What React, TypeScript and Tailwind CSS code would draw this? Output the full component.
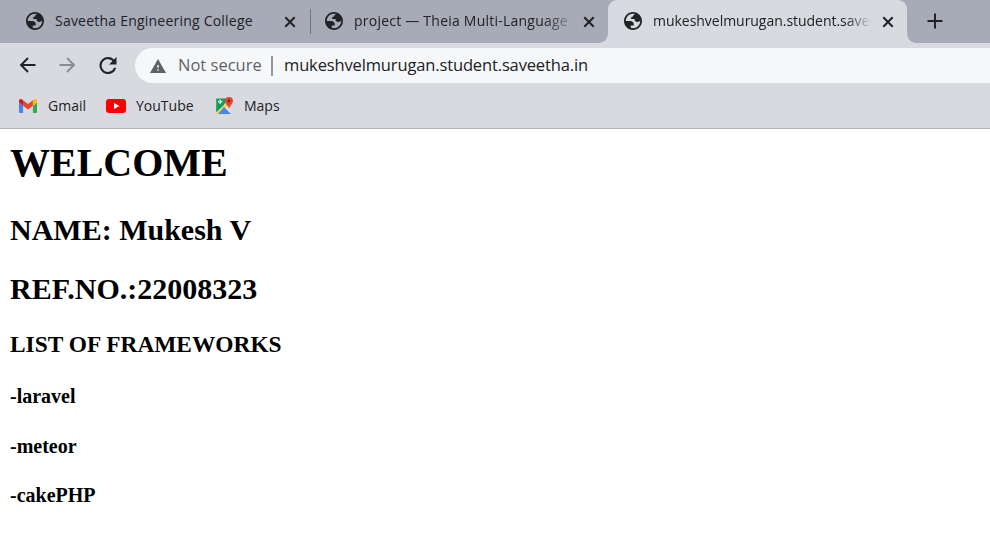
import React from 'react';

const ui = "font-['Open_Sans','Noto_Sans',sans-serif]";

function Globe() {
  return (
    <svg viewBox="2 2 20 20" className="-mt-px h-[18px] w-[18px] shrink-0" fill="#202225" fillRule="evenodd">
      <path d="M12 2C6.48 2 2 6.48 2 12s4.48 10 10 10 10-4.48 10-10S17.52 2 12 2zM4 12h4.4c3.4.02 4.9 1.73 4.5 5.13H9.5v2.47C10.3 19.86 11.1 20 12 20c4.42 0 8-3.58 8-8 0-.17 0-.34-.02-.5-.52 1-1.53 1.5-3 1.5-2.2 0-3.3-1.1-3.3-3.2H9.9c-.2-1.9.5-2.8 2.1-2.8 0-.98.32-1.54.97-1.67l1.06-1.05C13.4 4.1 12.7 4 12 4c-4.42 0-8 3.58-8 8z" />
    </svg>
  );
}

function Close() {
  return (
    <svg viewBox="0 0 12 12" className="h-3 w-3 shrink-0" stroke="#202225" strokeWidth="2">
      <path d="M1.3 1.3l9.4 9.4M10.7 1.3l-9.4 9.4" />
    </svg>
  );
}

function Gmail() {
  return (
    <svg viewBox="52 42 88 66" className="mt-px h-[14px] w-[18px]" preserveAspectRatio="none">
      <path fill="#4285f4" d="M58 108h14V74L52 59v43c0 3.320 2.690 6 6 6" />
      <path fill="#34a853" d="M120 108h14c3.320 0 6-2.690 6-6V59l-20 15" />
      <path fill="#fbbc04" d="M120 48v26l20-15v-8c0-7.420-8.470-11.650-14.400-7.200" />
      <path fill="#ea4335" d="M72 74V48l24 18 24-18v26L96 92" />
      <path fill="#c5221f" d="M52 51v8l20 15V48l-5.600-4.200c-5.940-4.450-14.400-.220-14.400 7.200" />
    </svg>
  );
}

function MapsIcon() {
  return (
    <svg viewBox="0 0 19 19" className="h-[19px] w-[19px]">
      <path d="M1.500 2.500h12L8 10l-6.800 6.500V3z" fill="#169c55" />
      <path d="M1.300 17L14 5v12.500H2z" fill="#eceeef" />
      <path d="M1 17L13 6l2 2-9 10H2z" fill="#fdd33c" />
      <path d="M3 18l6-7 7 7z" fill="#4285f4" />
      <path d="M10 11l5.500-2v8z" fill="#dfe3e6" />
      <path d="M7.400 5.400H5v1.100h1.200A1.500 1.500 0 1 1 5.900 4.500" fill="none" stroke="#fff" />
      <path d="M14 1a4 4 0 0 0-4 4c0 3 3.300 4.500 4 8 .7-3.500 4-5 4-8a4 4 0 0 0-4-4z" fill="#e84335" />
      <circle cx="14" cy="5" r="1.400" fill="#8e1e19" />
    </svg>
  );
}

export default function App() {
  return (
    <div className={`h-[545px] w-[990px] overflow-hidden bg-white text-[#202225] ${ui}`}>
      <div className="flex h-[43px] bg-[#a7abb7] text-[14px] leading-[40px]">
        <div className="flex w-[310px] items-center pl-[26px]">
          <Globe />
          <span className="-mt-[2px] ml-[11px] w-[229px] tracking-[0.22px] whitespace-nowrap">Saveetha Engineering College</span>
          <Close />
        </div>
        <div className="mt-[9px] h-[25px] w-px bg-[#70747d]" />
        <div className="flex w-[297px] items-center pl-[14px]">
          <Globe />
          <span className="-mt-[2px] ml-[11px] w-[215px] overflow-hidden tracking-[0.23px] whitespace-nowrap [mask-image:linear-gradient(to_right,black_88%,transparent_104%)]">project — Theia Multi-Language</span>
          <span className="ml-[14px]"><Close /></span>
        </div>
        <div className="relative flex w-[299px] items-center rounded-t-[9px] bg-[#d9dadf] pl-[16px]">
          <span className="absolute bottom-0 -left-[9px] h-[9px] w-[9px] bg-[radial-gradient(circle_at_0_0,transparent_8.500px,#d9dadf_9px)]" />
          <span className="absolute -right-[9px] bottom-0 h-[9px] w-[9px] bg-[radial-gradient(circle_at_100%_0,transparent_8.500px,#d9dadf_9px)]" />
          <Globe />
          <span className="-mt-[2px] ml-[11px] w-[219px] overflow-hidden tracking-[-0.03px] whitespace-nowrap [mask-image:linear-gradient(to_right,black_88%,transparent)]">mukeshvelmurugan.student.saveetha.in</span>
          <span className="ml-[10px]"><Close /></span>
        </div>
        <svg viewBox="0 0 16 16" className="mt-[13px] ml-[20px] h-4 w-4" stroke="#202225" strokeWidth="2"><path d="M8 .5v15M.5 8h15" /></svg>
      </div>

      <div className="flex h-[45px] items-center bg-[#d9dadf] pl-[19px]">
        <svg viewBox="0 0 18 18" className="-mt-px h-[18px] w-[18px]" fill="none" stroke="#202225" strokeWidth="1.900"><path d="M16.500 9H2M9 2L2 9 9 16" /></svg>
        <svg viewBox="0 0 18 18" className="-mt-px ml-[22px] h-[18px] w-[18px]" fill="none" stroke="#8a8c91" strokeWidth="1.900"><path d="M.5 9H15M8 2l7 7-7 7" /></svg>
        <svg viewBox="4 4 16 16" className="-mt-px ml-[22px] h-[17px] w-[18px]" fill="#202225"><path d="M17.650 6.350A7.960 7.960 0 0 0 12 4a8 8 0 1 0 7.730 10h-2.080A6 6 0 1 1 12 6c1.660 0 3.140.690 4.220 1.780L13 11h7V4z" /></svg>
        <div className="ml-[18px] flex h-[35px] flex-1 items-center rounded-l-full bg-[#f5f7f9] pl-[15px] text-[16.500px] whitespace-nowrap">
          <svg viewBox="1 2 22 19" className="h-[14px] w-[16px]" fill="#5d6064"><path d="M1 21h22L12 2 1 21zm12-3h-2v-2h2v2zm0-4h-2v-4h2v4z" /></svg>
          <span className="ml-[12px] w-[93px] text-[#5f6368]">Not secure</span>
          <span className="h-5 w-[2px] bg-[#94979b]" />
          <span className="ml-[11px] tracking-[-0.14px]">mukeshvelmurugan.student.saveetha.in</span>
        </div>
      </div>

      <div className="flex h-[41px] items-center border-b border-[#b2b3b8] bg-[#d9dadf] pb-[6px] pl-[19px] text-[14px]">
        <Gmail />
        <span className="ml-[11px] w-[58px]">Gmail</span>
        <svg viewBox="0 0 20 14" className="mt-[2px] h-[14px] w-5"><rect width="20" height="14" rx="3" fill="#f00" /><path d="M8 4l5.500 3L8 10z" fill="#fff" /></svg>
        <span className="ml-[10px] w-[79px]">YouTube</span>
        <MapsIcon />
        <span className="ml-[10px]">Maps</span>
      </div>

      <main className="pl-[10px] font-['Liberation_Serif',serif] font-bold whitespace-nowrap text-black">
        <h1 className="mt-[11px] text-[40px] leading-[46px]">WELCOME</h1>
        <h2 className="mt-[26px] text-[30px] leading-[36px]">NAME: Mukesh V</h2>
        <h2 className="mt-[23px] text-[30px] leading-[36px]">REF.NO.:22008323</h2>
        <h3 className="mt-[24px] text-[23.400px] leading-[26px]">LIST OF FRAMEWORKS</h3>
        <h4 className="mt-[27px] text-[20px] leading-[24px]">-laravel</h4>
        <h4 className="mt-[26px] text-[20px] leading-[24px]">-meteor</h4>
        <h4 className="mt-[25px] text-[20px] leading-[24px]">-cakePHP</h4>
      </main>
    </div>
  );
}
